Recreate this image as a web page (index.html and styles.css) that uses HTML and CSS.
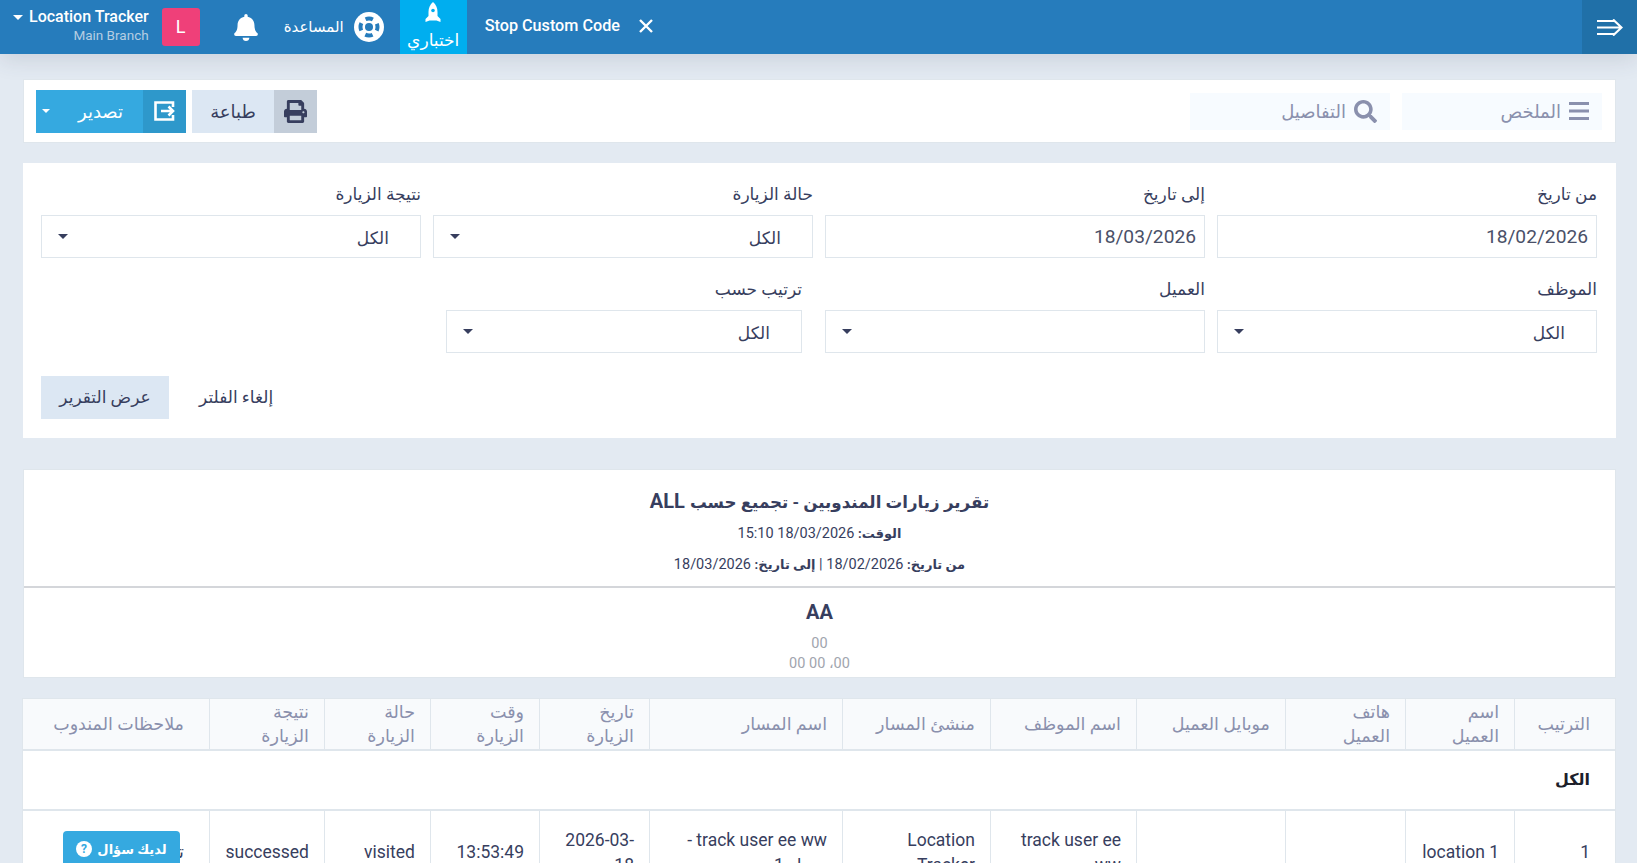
FILE: index.html
```html
<!DOCTYPE html>
<html lang="ar" dir="rtl">
<head>
    <title>تقرير زيارات المندوبين</title>
    <meta charset="utf-8">
    <link rel="stylesheet" href="styles.css">
</head>
<body>
    <!-- Top bar -->
    <header class="topbar">
        <a class="menu-toggle" href="#">
            <svg width="26" height="17" viewBox="0 0 26 17"><path d="M0 2h17M0 8.500h24M0 15h17M16 .5l8.500 8-8.500 8" fill="none" stroke="#fff" stroke-width="2.200"/></svg>
        </a>
        <div class="topbar-items">
            <div class="stop-code">
                <svg class="stop-x" width="16" height="16" viewBox="0 0 16 16"><path d="M2 2l12 12M14 2L2 14" stroke="#fff" stroke-width="2.400"/></svg>
                <span>Stop Custom Code</span>
            </div>
            <a class="test-tab" href="#">
                <svg width="18" height="22" viewBox="0 0 18 22"><path d="M9 0c3 2.500 4.500 6 4.500 10v4l3 3v3l-4-1.500H5.500L1.500 20v-3l3-3v-4C4.500 6 6 2.500 9 0z" fill="#fff"/><circle cx="9" cy="8.500" r="1.800" fill="#00aeef"/></svg>
                <span>اختباري</span>
            </a>
            <a class="help-link" href="#">
                <svg width="30" height="30" viewBox="0 0 30 30"><circle cx="15" cy="15" r="15" fill="#fff"/><circle cx="15" cy="15" r="8.500" fill="none" stroke="#267cbc" stroke-width="4" stroke-dasharray="7.500 5.850" stroke-dashoffset="3.750"/><circle cx="15" cy="15" r="4" fill="#267cbc"/></svg>
                <span>المساعدة</span>
            </a>
            <a class="bell" href="#">
                <svg width="24" height="27" viewBox="0 0 448 512"><path fill="#fff" d="M224 512c35.320 0 63.970-28.650 63.970-64H160.030c0 35.350 28.650 64 63.970 64zm215.390-149.710c-19.320-20.760-55.470-51.990-55.470-154.290 0-77.700-54.480-139.900-127.940-155.160V32c0-17.670-14.320-32-31.980-32s-31.980 14.330-31.980 32v20.840C118.560 68.100 64.080 130.300 64.080 208c0 102.300-36.150 133.530-55.470 154.290-6 6.450-8.660 14.160-8.610 21.710.11 16.400 12.980 32 32.100 32h383.800c19.120 0 32-15.600 32.100-32 .05-7.550-2.610-15.270-8.610-21.710z"/></svg>
            </a>
            <span class="avatar">L</span>
            <div class="branch">
                <div class="branch-name"><span class="caret caret-white"></span><span>Location Tracker</span></div>
                <div class="branch-sub">Main Branch</div>
            </div>
        </div>
    </header>

    <main class="content">
        <!-- Toolbar -->
        <section class="card toolbar">
            <div class="tabs">
                <a class="tab" href="#">
                    <svg width="20" height="18" viewBox="0 0 20 18"><path d="M0 1.500h20M0 9h20M0 16.500h20" stroke="#8a90ad" stroke-width="3"/></svg>
                    <span>الملخص</span>
                </a>
                <a class="tab" href="#">
                    <svg width="23" height="23" viewBox="0 0 512 512"><path fill="#8a90ad" d="M505 442.700L405.300 343c-4.500-4.500-10.600-7-17-7H372c27.600-35.300 44-79.700 44-128C416 93.100 322.900 0 208 0S0 93.100 0 208s93.100 208 208 208c48.300 0 92.700-16.400 128-44v16.300c0 6.400 2.500 12.500 7 17l99.700 99.700c9.400 9.400 24.600 9.400 33.900 0l28.300-28.300c9.400-9.400 9.400-24.600.1-34zM208 336c-70.700 0-128-57.200-128-128 0-70.700 57.200-128 128-128 70.700 0 128 57.200 128 128 0 70.700-57.200 128-128 128z"/></svg>
                    <span>التفاصيل</span>
                </a>
            </div>
            <div class="actions">
                <a class="btn-icon btn-print" href="#">
                    <span class="btn-icon-box">
                        <svg width="23" height="23" viewBox="0 0 512 512"><path fill="#373e5e" d="M448 192V77.250c0-8.490-3.370-16.620-9.370-22.630L393.370 9.370c-6-6-14.140-9.370-22.630-9.370H96C78.330 0 64 14.330 64 32v160c-35.350 0-64 28.650-64 64v112c0 8.840 7.160 16 16 16h48v96c0 17.670 14.330 32 32 32h320c17.670 0 32-14.330 32-32v-96h48c8.840 0 16-7.160 16-16V256c0-35.350-28.650-64-64-64zm-64 256H128v-96h256v96zm0-224H128V64h192v48c0 8.840 7.160 16 16 16h48v96zm48 72c-13.250 0-24-10.750-24-24 0-13.260 10.750-24 24-24s24 10.740 24 24c0 13.250-10.750 24-24 24z"/></svg>
                    </span>
                    <span class="btn-label">طباعة</span>
                </a>
                <a class="btn-icon btn-export" href="#">
                    <span class="btn-icon-box">
                        <svg width="22" height="20" viewBox="0 0 22 20"><path d="M19 6V1.500H1.500v17H19V14" fill="none" stroke="#fff" stroke-width="2.600"/><path d="M7 10h12M14.500 5.500L19 10l-4.500 4.500" fill="none" stroke="#fff" stroke-width="2.600"/></svg>
                    </span>
                    <span class="btn-label">تصدير</span>
                    <span class="caret caret-white caret-small"></span>
                </a>
            </div>
        </section>

        <!-- Filters -->
        <section class="card filters">
            <div class="filter-row">
                <div class="field">
                    <label>من تاريخ</label>
                    <div class="input date">18/02/2026</div>
                </div>
                <div class="field">
                    <label>إلى تاريخ</label>
                    <div class="input date">18/03/2026</div>
                </div>
                <div class="field">
                    <label>حالة الزيارة</label>
                    <div class="input select indent"><span>الكل</span><span class="caret"></span></div>
                </div>
                <div class="field">
                    <label>نتيجة الزيارة</label>
                    <div class="input select indent"><span>الكل</span><span class="caret"></span></div>
                </div>
            </div>
            <div class="filter-row">
                <div class="field">
                    <label>الموظف</label>
                    <div class="input select indent"><span>الكل</span><span class="caret"></span></div>
                </div>
                <div class="field">
                    <label>العميل</label>
                    <div class="input select"><span></span><span class="caret"></span></div>
                </div>
                <div class="field field-narrow">
                    <label>ترتيب حسب</label>
                    <div class="input select indent"><span>الكل</span><span class="caret"></span></div>
                </div>
            </div>
            <div class="filter-actions">
                <a class="btn-clear" href="#">إلغاء الفلتر</a>
                <a class="btn-show" href="#">عرض التقرير</a>
            </div>
        </section>

        <!-- Report -->
        <section class="card report-head">
            <div class="report-title">
                <h1><span class="title-ar">تقرير زيارات المندوبين - تجميع حسب</span> ALL</h1>
                <p><b>الوقت:</b> 18/03/2026 15:10</p>
                <p><b>من تاريخ:</b> 18/02/2026 | <b>إلى تاريخ:</b> 18/03/2026</p>
            </div>
            <div class="report-company">
                <h2>AA</h2>
                <div class="muted">00</div>
                <div class="muted">00، 00 00</div>
            </div>
        </section>

        <table class="report-table">
            <colgroup>
                <col class="w-101"><col class="w-109"><col class="w-120"><col class="w-149"><col class="w-146"><col class="w-148">
                <col class="w-193"><col class="w-110"><col class="w-109"><col class="w-106"><col class="w-115"><col class="w-187">
            </colgroup>
            <thead>
                <tr>
                    <th>الترتيب</th>
                    <th>اسم<br>العميل</th>
                    <th>هاتف<br>العميل</th>
                    <th>موبايل العميل</th>
                    <th>اسم الموظف</th>
                    <th>منشئ المسار</th>
                    <th>اسم المسار</th>
                    <th>تاريخ<br>الزيارة</th>
                    <th>وقت<br>الزيارة</th>
                    <th>حالة<br>الزيارة</th>
                    <th>نتيجة<br>الزيارة</th>
                    <th>ملاحظات المندوب</th>
                </tr>
            </thead>
            <tbody>
                <tr class="group-row"><td colspan="12">الكل</td></tr>
                <tr>
                    <td>1</td>
                    <td>location 1</td>
                    <td></td>
                    <td></td>
                    <td>track user ee ww</td>
                    <td>Location Tracker</td>
                    <td>track user ee ww - مسار 1</td>
                    <td>2026-03-18</td>
                    <td>13:53:49</td>
                    <td>visited</td>
                    <td>successed</td>
                    <td>تم</td>
                </tr>
            </tbody>
        </table>
    </main>

    <!-- Floating help button -->
    <a class="ask-btn" href="#">
        <span>لديك سؤال</span>
        <svg width="16" height="16" viewBox="0 0 16 16"><circle cx="8" cy="8" r="8" fill="#fff"/><text x="8" y="12" text-anchor="middle" class="ask-mark">?</text></svg>
    </a>
</body>
</html>
```

FILE: styles.css
```css
html, body {
    height: 100%;
    overflow: hidden;
}

body {
    margin: 0;
    background-color: #e3eaf2;
    color: #373e5e;
    font-family: Roboto, "Noto Sans", "DejaVu Sans", sans-serif;
    font-size: 16px;
}

a {
    color: inherit;
    text-decoration: none;
}

/* top bar */
.topbar {
    display: flex;
    justify-content: space-between;
    height: 54px;
    background-color: #267cbc;
    color: white;
    box-shadow: 0 6px 22px rgba(55, 62, 94, 0.14);
}

.menu-toggle {
    display: flex;
    align-items: center;
    justify-content: center;
    width: 55px;
    background-color: #2070a8;
}

.topbar-items {
    display: flex;
    align-items: stretch;
}

.stop-code {
    display: flex;
    align-items: center;
    gap: 18px;
    padding: 0 0 3px 18px;
    font-size: 16.200px;
    font-weight: 500;
}

.test-tab {
    display: flex;
    flex-direction: column;
    align-items: center;
    justify-content: space-between;
    box-sizing: border-box;
    width: 67px;
    padding: 2px 0;
    background-color: #00aeef;
    font-size: 17px;
    line-height: 24px;
}

.help-link {
    display: flex;
    align-items: center;
    gap: 10px;
    padding-right: 16px;
    font-size: 15px;
}

.bell {
    display: flex;
    align-items: center;
    margin-right: 26px;
}

.avatar {
    align-self: center;
    width: 38px;
    height: 38px;
    margin-right: 34px;
    border-radius: 3px;
    background-color: #ef4079;
    font-size: 18px;
    line-height: 38px;
    text-align: center;
}

.branch {
    margin: 0 13px 0 13px;
    padding-top: 7px;
    text-align: right;
}

.branch-name {
    display: flex;
    flex-direction: row-reverse;
    align-items: center;
    gap: 6px;
    font-size: 16px;
    font-weight: 500;
    line-height: 20px;
}

.branch-sub {
    color: #b5cde2;
    font-size: 13.500px;
    line-height: 16px;
}

.caret {
    display: inline-block;
    width: 0;
    height: 0;
    border-top: 5px solid #373e5e;
    border-right: 5px solid transparent;
    border-left: 5px solid transparent;
}

.caret-white {
    border-top-color: white;
}

.caret-small {
    border-width: 4px 4px 0;
    border-top-color: white;
}

/* cards */
.content {
    padding: 25px 21px 0 23px;
}

.card {
    background-color: white;
    border: 1px solid #dfe6ec;
    box-sizing: border-box;
}

.toolbar {
    display: flex;
    justify-content: space-between;
    align-items: center;
    height: 64px;
    padding: 0 13px 0 12px;
}

.tabs {
    display: flex;
    gap: 12px;
}

.tab {
    display: flex;
    align-items: center;
    gap: 8px;
    box-sizing: border-box;
    width: 200px;
    height: 37px;
    padding: 0 13px 0 20px;
    background-color: #f7fbff;
    color: #8a90ad;
    font-size: 18px;
}

.actions {
    display: flex;
    gap: 6px;
}

.btn-icon {
    display: flex;
    align-items: center;
    height: 43px;
    font-size: 18px;
}

.btn-icon-box {
    display: flex;
    align-items: center;
    justify-content: center;
    width: 43px;
    height: 100%;
}

.btn-label {
    flex: 1;
    text-align: center;
}

.btn-print {
    width: 125px;
    background-color: #dce7f3;
}

.btn-print .btn-icon-box {
    background-color: #c3cdd9;
}

.btn-export {
    width: 150px;
    padding-left: 6px;
    box-sizing: border-box;
    background-color: #35a9e0;
    color: white;
}

.btn-export .btn-icon-box {
    background-color: #2e98cb;
}

.btn-export .btn-label {
    padding-left: 8px;
}

.filters {
    height: 275px;
    margin-top: 20px;
    padding: 17px 19px 0 18px;
    border: none;
}

.filter-row {
    display: grid;
    grid-template-columns: repeat(4, 380px);
    column-gap: 12px;
    height: 95px;
}

.field label {
    display: block;
    height: 26px;
    margin-bottom: 8px;
    padding-top: 1px;
    font-size: 17px;
    line-height: 26px;
}

.field-narrow {
    margin: 0 11px 0 13px;
}

.input {
    box-sizing: border-box;
    height: 43px;
    padding: 0 8px;
    border: 1px solid #dfe6ec;
    font-size: 19.200px;
    line-height: 41px;
}

.date {
    color: #4a5068;
}

.select {
    display: flex;
    justify-content: space-between;
    align-items: center;
    padding: 3px 16px 0;
    font-size: 17px;
}

.select .caret {
    margin-top: -3px;
}

.indent {
    padding-right: 31px;
}

.filter-actions {
    display: flex;
    flex-direction: row-reverse;
    justify-content: flex-end;
    gap: 30px;
    margin-top: 6px;
    direction: ltr;
    font-size: 17px;
}

.btn-show {
    width: 128px;
    height: 43px;
    background-color: #dce7f3;
    line-height: 43px;
    text-align: center;
}

.btn-clear {
    height: 43px;
    line-height: 43px;
}

/* report heading */
.report-head {
    height: 209px;
    margin-top: 31px;
    text-align: center;
}

.report-title {
    height: 116px;
    border-bottom: 2px solid #d4d6da;
}

.report-title h1 {
    margin: 0 0 2px;
    padding-top: 18px;
    font-size: 20px;
    font-weight: 700;
    line-height: 27px;
}

.title-ar {
    font-size: 16.700px;
}

.report-title p {
    margin: 0;
    height: 31px;
    font-size: 14.500px;
    line-height: 31px;
}

.report-title b {
    font-size: 13px;
}

.report-company h2 {
    margin: 0;
    padding-top: 11px;
    font-size: 20px;
    line-height: 26px;
}

.muted {
    color: #a1a5ae;
    font-size: 14.500px;
    line-height: 20px;
}

.report-company h2 + .muted {
    margin-top: 9px;
}

/* table */
.report-table {
    width: 1593px;
    margin-top: 20px;
    border-collapse: collapse;
    table-layout: fixed;
    background-color: white;
    font-size: 17.500px;
}

.w-101 { width: 101px; }
.w-109 { width: 109px; }
.w-120 { width: 120px; }
.w-149 { width: 149px; }
.w-146 { width: 146px; }
.w-148 { width: 148px; }
.w-193 { width: 193px; }
.w-110 { width: 110px; }
.w-106 { width: 106px; }
.w-115 { width: 115px; }
.w-187 { width: 187px; }

.report-table th {
    box-sizing: border-box;
    height: 51px;
    padding: 0 15px;
    border: 1px solid #dfe6ec;
    border-bottom-width: 2px;
    background-color: #f8fafc;
    color: #8a90ad;
    font-size: 17.500px;
    font-weight: 400;
    line-height: 24px;
    text-align: right;
}

.report-table td {
    padding: 17px 15px;
    border: 1px solid #dfe6ec;
    line-height: 25px;
    text-align: right;
}

.report-table th:first-child,
.report-table td:first-child,
.report-table th:last-child,
.report-table td:last-child {
    padding-right: 25px;
}

.report-table .group-row td {
    height: 60px;
    box-sizing: border-box;
    padding: 0 25px 0 15px;
    border-bottom-width: 2px;
    color: #1d1f2b;
    font-size: 16px;
    font-weight: 700;
}

/* floating button */
.ask-btn {
    position: fixed;
    left: 63px;
    bottom: -12px;
    display: flex;
    align-items: center;
    justify-content: center;
    gap: 5px;
    width: 117px;
    height: 44px;
    padding-bottom: 8px;
    box-sizing: border-box;
    border-radius: 4px 4px 0 0;
    background-color: #35a9e0;
    color: white;
    font-size: 13px;
    font-weight: 700;
}

.ask-mark {
    fill: #35a9e0;
    font-family: Roboto, sans-serif;
    font-size: 12px;
    font-weight: 700;
}
```
